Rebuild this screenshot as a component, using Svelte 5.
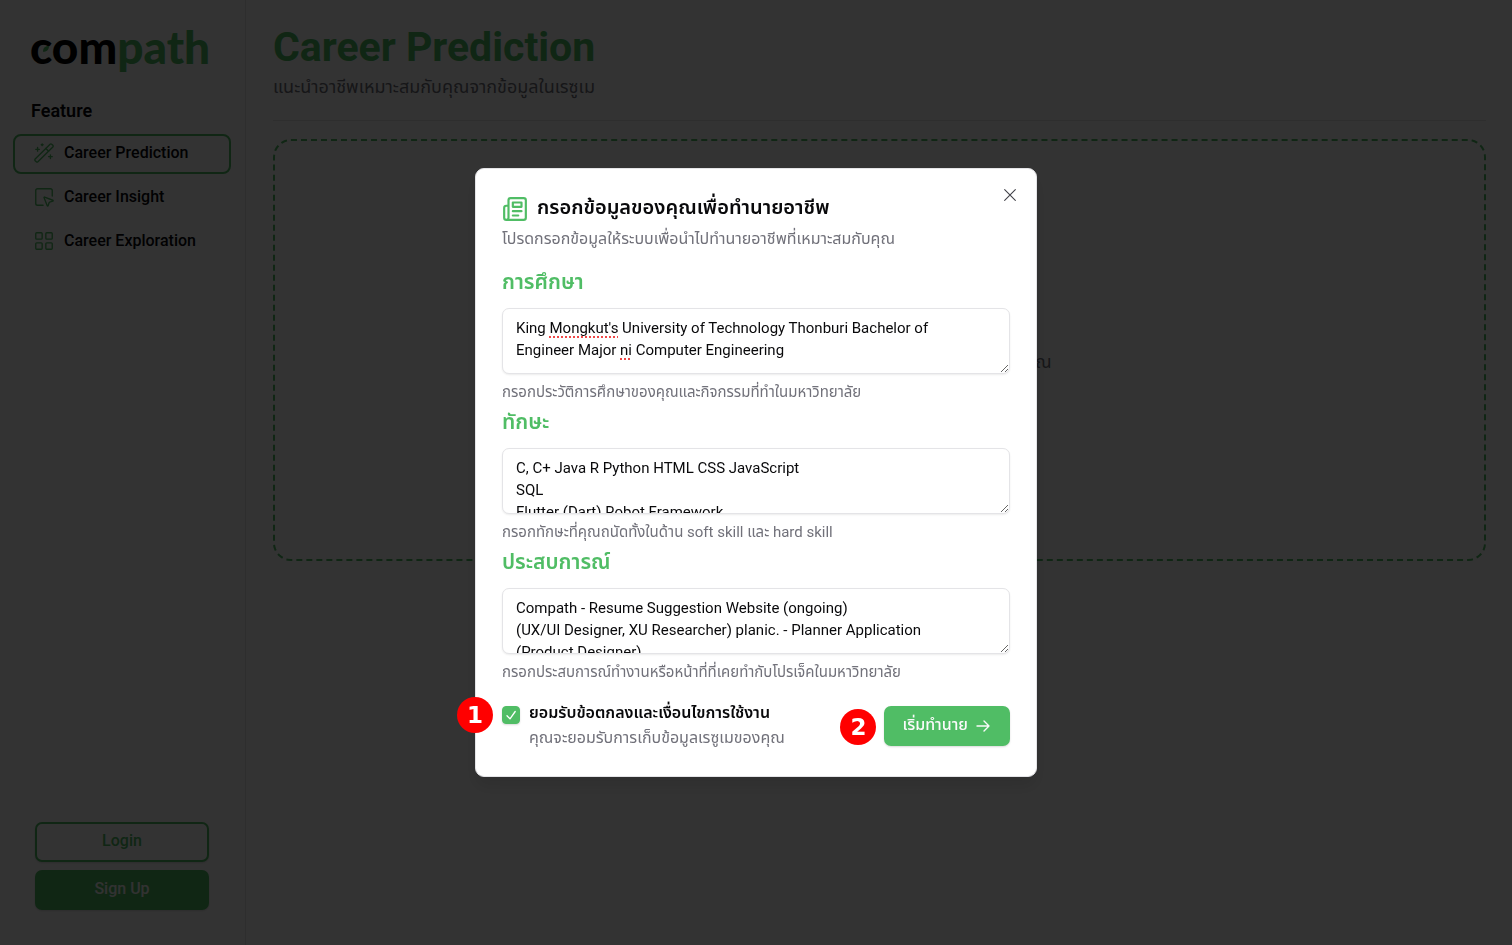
<script>
  const nav = [
    { label: 'Career Prediction', icon: 'wand', active: true },
    { label: 'Career Insight', icon: 'pointer', active: false },
    { label: 'Career Exploration', icon: 'grid', active: false }
  ];

  let fields = $state([
    {
      id: 'education',
      label: 'การศึกษา',
      value: "King Mongkut's University of Technology Thonburi Bachelor of\nEngineer Major ni Computer Engineering",
      hint: 'กรอกประวัติการศึกษาของคุณและกิจกรรมที่ทำในมหาวิทยาลัย',
      flagged: ["Mongkut's", 'ni']
    },
    {
      id: 'skills',
      label: 'ทักษะ',
      value: 'C, C+ Java R Python HTML CSS JavaScript\nSQL\nFlutter (Dart) Robot Framework',
      hint: 'กรอกทักษะที่คุณถนัดทั้งในด้าน soft skill และ hard skill',
      flagged: []
    },
    {
      id: 'experience',
      label: 'ประสบการณ์',
      value: 'Compath - Resume Suggestion Website (ongoing)\n(UX/UI Designer, XU Researcher) planic. - Planner Application\n(Product Designer)',
      hint: 'กรอกประสบการณ์ทำงานหรือหน้าที่ที่เคยทำกับโปรเจ็คในมหาวิทยาลัย',
      flagged: []
    }
  ]);
  let accepted = $state(true);
</script>

<div class="page">
  <aside class="sidebar">
    <div class="logo">
      <span class="logo-dark">com</span><span class="logo-green">path</span>
      <svg class="leaf" viewBox="0 0 6 6" aria-hidden="true"><path d="M6 0C2.500 0 0 1.500 0 5.800 3.500 5.800 6 4 6 0Z" fill="currentColor" /></svg>
    </div>
    <h2>Feature</h2>
    <nav>
      {#each nav as item}
        <a href="#top" class="nav-item" class:active={item.active}>
          <svg viewBox="0 0 24 24" aria-hidden="true">
            {#if item.icon === 'wand'}
              <path d="m21.640 3.640-1.280-1.280a1.210 1.210 0 0 0-1.720 0L2.360 18.640a1.210 1.210 0 0 0 0 1.720l1.280 1.280a1.200 1.200 0 0 0 1.720 0L21.640 5.360a1.200 1.200 0 0 0 0-1.720" />
              <path d="m14 7 3 3M5 6v4M19 14v4M10 2v2M7 8H3M21 16h-4M11 3H9" />
            {:else if item.icon === 'pointer'}
              <path d="M12.034 12.681a.498.498 0 0 1 .647-.647l9 3.500a.500.500 0 0 1-.033.943l-3.444 1.068a1 1 0 0 0-.660.660l-1.067 3.443a.500.500 0 0 1-.943.033z" />
              <path d="M21 11V5a2 2 0 0 0-2-2H5a2 2 0 0 0-2 2v14a2 2 0 0 0 2 2h6" />
            {:else}
              <rect x="3" y="3" width="7" height="7" rx="1" />
              <rect x="14" y="3" width="7" height="7" rx="1" />
              <rect x="14" y="14" width="7" height="7" rx="1" />
              <rect x="3" y="14" width="7" height="7" rx="1" />
            {/if}
          </svg>
          <span>{item.label}</span>
        </a>
      {/each}
    </nav>
    <div class="account">
      <button type="button" class="btn outline">Login</button>
      <button type="button" class="btn solid">Sign Up</button>
    </div>
  </aside>

  <main>
    <h1>Career Prediction</h1>
    <p class="lead">แนะนำอาชีพเหมาะสมกับคุณจากข้อมูลในเรซูเม</p>
    <hr />
    <section class="dropzone"><p>ณ</p></section>
  </main>
</div>

<div class="overlay">
  <div class="dialog" role="dialog" aria-modal="true" aria-labelledby="dialog-title">
    <button type="button" class="close" aria-label="Close">
      <svg viewBox="0 0 15 15" aria-hidden="true"><path d="M2.500 2.500l10 10M12.500 2.500l-10 10" /></svg>
    </button>
    <header>
      <div class="title-row">
        <svg viewBox="0 0 24 24" aria-hidden="true">
          <path d="M4 22h16a2 2 0 0 0 2-2V4a2 2 0 0 0-2-2H8a2 2 0 0 0-2 2v16a2 2 0 0 1-2 2Zm0 0a2 2 0 0 1-2-2v-9c0-1.100.900-2 2-2h2" />
          <path d="M18 14h-8M15 18h-5M10 6h8v4h-8V6Z" />
        </svg>
        <h2 id="dialog-title">กรอกข้อมูลของคุณเพื่อทำนายอาชีพ</h2>
      </div>
      <p class="description">โปรดกรอกข้อมูลให้ระบบเพื่อนำไปทำนายอาชีพที่เหมาะสมกับคุณ</p>
    </header>

    <form>
      {#each fields as field}
        <div class="field">
          <label for={field.id}>{field.label}</label>
          <div class="editor">
            <textarea id={field.id} spellcheck="false" bind:value={field.value}></textarea>
            {#if field.flagged.length}
              <div class="marks" aria-hidden="true">{#each field.value.split(/(\s+)/) as word}<span class:flag={field.flagged.includes(word)}>{word}</span>{/each}</div>
            {/if}
          </div>
          <p class="hint">{field.hint}</p>
        </div>
      {/each}

      <div class="footer">
        <div class="consent">
          <span class="badge">1</span>
          <span class="check">
            <input type="checkbox" id="accept" bind:checked={accepted} />
            {#if accepted}
              <svg viewBox="0 0 18 18" aria-hidden="true"><path d="M5 9.800l3 3L13.200 5.500" /></svg>
            {/if}
          </span>
          <div>
            <label for="accept">ยอมรับข้อตกลงและเงื่อนไขการใช้งาน</label>
            <p class="description">คุณจะยอมรับการเก็บข้อมูลเรซูเมของคุณ</p>
          </div>
        </div>
        <div class="submit">
          <span class="badge">2</span>
          <button type="button" class="btn solid">
            เริ่มทำนาย
            <svg viewBox="0 0 18 18" aria-hidden="true"><path d="M3 9h12M10 4l5 5-5 5" /></svg>
          </button>
        </div>
      </div>
    </form>
  </div>
</div>

<style>
  :global(body) {
    margin: 0;
    background: #fff;
  }
  .page,
  .overlay {
    font-family: Roboto, 'Noto Sans Thai', 'Noto Sans', sans-serif;
    font-size: 16px;
    line-height: 22px;
    color: #09090b;
    --green: #50bd65;
    --muted: #71717a;
    --line: #e4e4e7;
  }
  *,
  *::before {
    box-sizing: border-box;
  }
  h1, h2, p {
    margin: 0;
  }
  button, textarea, input {
    font: inherit;
  }
  svg {
    fill: none;
    stroke: currentColor;
    stroke-width: 2;
    stroke-linecap: round;
    stroke-linejoin: round;
    flex: none;
  }

  .page {
    display: flex;
    min-height: 100vh;
  }
  .sidebar {
    display: flex;
    flex-direction: column;
    width: 246px;
    flex: none;
    padding: 19px 14px 35px 13px;
    border-right: 1px solid var(--line);
  }
  .logo {
    position: relative;
    align-self: flex-start;
    margin-left: 17px;
    font-family: Lato, sans-serif;
    font-size: 46px;
    line-height: 56px;
    font-weight: 900;
  }
  .logo-dark {
    color: #000;
  }
  .logo-green {
    color: var(--green);
  }
  .leaf {
    position: absolute;
    left: 13px;
    top: 27px;
    width: 6px;
    height: 6px;
    stroke: none;
    color: var(--green);
  }
  .sidebar h2 {
    margin: 24px 0 11px 18px;
    font-size: 18px;
    line-height: 24px;
    font-weight: 600;
  }
  nav {
    display: grid;
    gap: 4px;
  }
  .nav-item {
    display: flex;
    align-items: center;
    gap: 9px;
    height: 40px;
    padding: 0 18px 2px;
    border: 2px solid transparent;
    border-radius: 8px;
    color: inherit;
    font-weight: 500;
    text-decoration: none;
  }
  .nav-item.active {
    border-color: var(--green);
  }
  .nav-item svg {
    width: 22px;
    height: 22px;
    stroke-width: 1.500;
    color: var(--green);
  }
  .account {
    display: grid;
    gap: 8px;
    margin-top: auto;
    padding: 0 22px;
  }
  .btn {
    display: flex;
    align-items: center;
    justify-content: center;
    gap: 6px;
    height: 40px;
    padding: 0 16px 2px;
    border: 2px solid var(--green);
    border-radius: 7px;
    font-weight: 500;
    box-shadow: 0 1px 2px rgba(0, 0, 0, 0.15);
  }
  .outline {
    background: #fff;
    color: var(--green);
  }
  .solid {
    background: var(--green);
    color: #fafafa;
  }

  main {
    flex: 1;
    min-width: 0;
    padding: 23px 26px 24px 27px;
  }
  h1 {
    color: var(--green);
    font-size: 41px;
    line-height: 48px;
    font-weight: 700;
  }
  .lead {
    margin-top: 2px;
    color: var(--muted);
    font-size: 18px;
    line-height: 28px;
  }
  hr {
    height: 1px;
    margin: 19px 0 18px;
    border: 0;
    background: var(--line);
  }
  .dropzone {
    display: grid;
    place-items: center;
    height: 422px;
    border: 2px dashed var(--green);
    border-radius: 18px;
  }
  .dropzone p {
    width: 344px;
    padding-top: 24px;
    color: var(--muted);
    font-size: 18px;
    text-align: right;
  }

  .overlay {
    position: fixed;
    inset: 0;
    display: grid;
    place-items: center;
    background: rgba(0, 0, 0, 0.8);
  }
  .dialog {
    position: relative;
    width: 562px;
    max-width: 100%;
    padding: 26px 26px 27px;
    border: 1px solid var(--line);
    border-radius: 9px;
    background: #fff;
    box-shadow: 0 10px 16px rgba(0, 0, 0, 0.1);
  }
  .close {
    position: absolute;
    top: 18px;
    right: 18px;
    display: grid;
    padding: 0;
    border: 0;
    background: none;
    color: #3f3f46;
  }
  .close svg {
    width: 16px;
    height: 16px;
    stroke-width: 1;
  }
  .title-row {
    display: flex;
    gap: 9px;
    height: 28px;
  }
  .title-row svg {
    width: 26px;
    height: 26px;
    margin-top: 1px;
    color: var(--green);
  }
  .title-row h2 {
    font-size: 20px;
    line-height: 24px;
    font-weight: 600;
  }
  .description {
    color: var(--muted);
  }
  header .description {
    margin-top: 5px;
  }
  form {
    margin-top: 18px;
  }
  .field {
    height: 140px;
  }
  .field label {
    display: block;
    height: 40px;
    color: var(--green);
    font-size: 21px;
    line-height: 28px;
    font-weight: 600;
  }
  .editor {
    position: relative;
    height: 66px;
    font-size: 15px;
  }
  textarea {
    display: block;
    width: 100%;
    height: 66px;
    padding: 8px 13px;
    overflow: hidden;
    border: 1px solid var(--line);
    border-radius: 7px;
    background: #fff;
    color: inherit;
    outline: none;
    resize: vertical;
    box-shadow: 0 1px 2px rgba(0, 0, 0, 0.08);
  }
  .marks {
    position: absolute;
    inset: 0;
    padding: 9px 14px;
    color: transparent;
    white-space: pre-wrap;
    pointer-events: none;
  }
  .flag {
    text-decoration: underline dotted #f04848 2px;
    text-underline-offset: 3px;
    text-decoration-skip-ink: none;
  }
  .hint {
    margin-top: 8px;
    color: var(--muted);
    font-size: 15px;
    line-height: 20px;
  }
  .footer {
    display: flex;
    justify-content: space-between;
    align-items: flex-start;
    padding-top: 14px;
  }
  .consent {
    position: relative;
    display: flex;
    gap: 9px;
  }
  .consent label {
    display: block;
    font-weight: 600;
  }
  .consent .description {
    margin-top: 3px;
  }
  .check {
    position: relative;
    width: 18px;
    height: 18px;
    margin-top: 4px;
  }
  .check input {
    display: block;
    appearance: none;
    width: 18px;
    height: 18px;
    margin: 0;
    border: 1px solid var(--green);
    border-radius: 4px;
    box-shadow: 0 1px 2px rgba(0, 0, 0, 0.15);
  }
  .check input:checked {
    background: var(--green);
  }
  .check svg {
    position: absolute;
    inset: 0;
    color: #fff;
    stroke-width: 1.300;
    pointer-events: none;
  }
  .submit {
    position: relative;
    margin-top: 4px;
  }
  .submit svg {
    width: 18px;
    height: 18px;
    margin-top: 2px;
    stroke-width: 1.400;
  }
  .badge {
    position: absolute;
    top: 3px;
    left: -44px;
    display: grid;
    place-items: center;
    width: 36px;
    height: 36px;
    border-radius: 50%;
    background: #f00;
    color: #fff;
    font: 700 23px/36px 'DejaVu Sans', sans-serif;
  }
  .consent .badge {
    top: -5px;
    left: -45px;
  }
</style>
